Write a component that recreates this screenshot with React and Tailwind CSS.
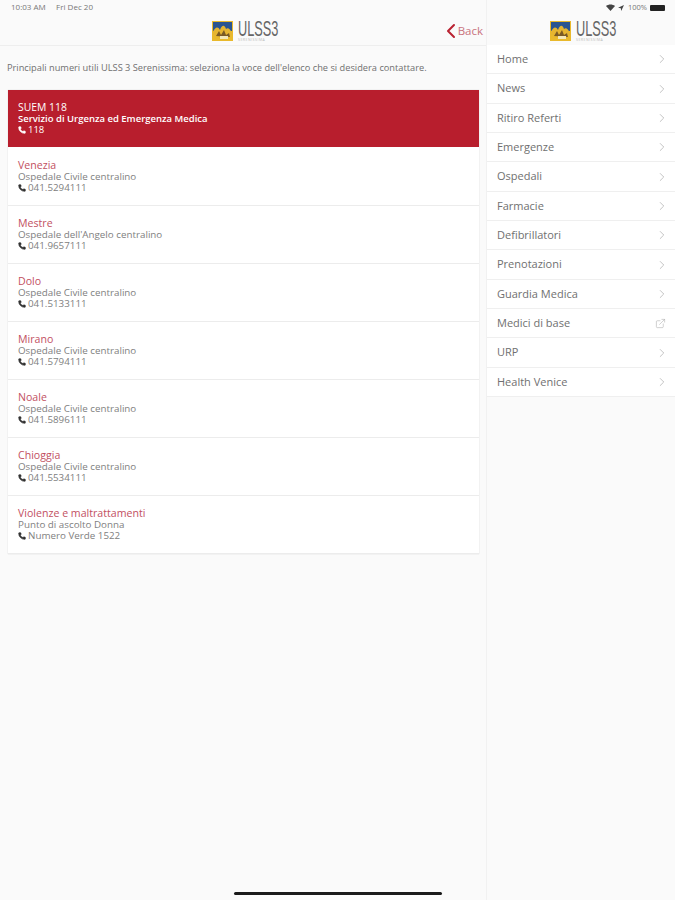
import { ChevronRight, ChevronLeft, Phone, ExternalLink } from "lucide-react";

const contacts = [
  { title: "Venezia", sub: "Ospedale Civile centralino", phone: "041.5294111" },
  { title: "Mestre", sub: "Ospedale dell'Angelo centralino", phone: "041.9657111" },
  { title: "Dolo", sub: "Ospedale Civile centralino", phone: "041.5133111" },
  { title: "Mirano", sub: "Ospedale Civile centralino", phone: "041.5794111" },
  { title: "Noale", sub: "Ospedale Civile centralino", phone: "041.5896111" },
  { title: "Chioggia", sub: "Ospedale Civile centralino", phone: "041.5534111" },
  { title: "Violenze e maltrattamenti", sub: "Punto di ascolto Donna", phone: "Numero Verde 1522" },
];

const menu = [
  "Home",
  "News",
  "Ritiro Referti",
  "Emergenze",
  "Ospedali",
  "Farmacie",
  "Defibrillatori",
  "Prenotazioni",
  "Guardia Medica",
  "Medici di base",
  "URP",
  "Health Venice",
];

function Logo() {
  return (
    <div className="flex items-center gap-[5px] h-[22px] ml-[4px]">
      <svg width="21" height="20" viewBox="0 0 21 20">
        <rect width="21" height="20" fill="#e9b92c" />
        <rect x="1" y="1" width="19" height="9" fill="#2a5490" />
        <path d="M1 11 C3 6 6 5 8 9 C10 3 13 4 14 8 C16 6 18 8 20 12 L20 14 L1 14 Z" fill="#e6b530" />
        <path d="M4 15 L7 10 L9 14 L12 9 L14 14 L17 12 L18 16 Z" fill="#7a5a24" />
        <rect x="8" y="15" width="8" height="3" fill="#f3e7b8" />
      </svg>
      <div className="flex flex-col w-[40px] h-[22px]">
        <span className="block w-[70px] h-[18px] font-['Liberation_Sans',sans-serif] text-[22px] leading-[18px] text-[#666] origin-left scale-x-[0.58] whitespace-nowrap">
          ULSS3
        </span>
        <span className="block h-[4px] text-[3.5px] leading-[4px] tracking-[0.5px] text-[#bbb] whitespace-nowrap">
          SERENISSIMA
        </span>
      </div>
    </div>
  );
}

function ContactRow({ title, sub, phone }) {
  return (
    <div className="h-[58px] bg-white border-b border-[#ececec] pl-[10px] pt-[12px] leading-[11px]">
      <div className="text-[10.6px] text-[#c2505f]">{title}</div>
      <div className="text-[9.8px] text-[#808080]">{sub}</div>
      <div className="flex items-center gap-[2px] text-[9.8px] text-[#808080]">
        <Phone size={8} fill="#333" stroke="#333" />
        <span>{phone}</span>
      </div>
    </div>
  );
}

export default function App() {
  return (
    <div className="relative flex w-[675px] h-[900px] overflow-hidden bg-[#fafafa] font-['Open_Sans',sans-serif]">
      <div className="flex flex-col w-[487px] border-r border-[#f1f1f1]">
        <div className="relative flex flex-col h-[46px] border-b border-[#eeeeee]">
          <div className="h-[16px] pl-[11px] pt-[2px] text-[8px] leading-[10px] text-[#777] whitespace-pre">
            10:03 AM     Fri Dec 20
          </div>
          <div className="flex justify-center mt-[4px]">
            <Logo />
          </div>
          <div className="absolute right-[3px] top-[19px] flex items-center text-[11.5px] leading-[24px] text-[#c9737d]">
            <ChevronLeft size={24} strokeWidth={2} className="text-[#b92231] -mr-[5px]" />
            <span>Back</span>
          </div>
        </div>
        <p className="mt-[16px] pl-[7px] text-[9.25px] leading-[12px] text-[#707070] whitespace-nowrap">
          Principali numeri utili ULSS 3 Serenissima: seleziona la voce dell'elenco che si desidera contattare.
        </p>
        <div className="mt-[16px] mx-[8px] w-[471px] shadow-[0_0_1px_rgba(0,0,0,0.2)]">
          <div className="h-[58px] bg-[#b81e2d] pl-[10px] pt-[12px] leading-[11px] text-white border-b border-white">
            <div className="text-[10.4px]">SUEM 118</div>
            <div className="text-[9.5px] font-semibold">Servizio di Urgenza ed Emergenza Medica</div>
            <div className="flex items-center gap-[2px] text-[9.5px]">
              <Phone size={8} fill="#fff" stroke="#fff" />
              <span>118</span>
            </div>
          </div>
          {contacts.map((c) => (
            <ContactRow key={c.title} title={c.title} sub={c.sub} phone={c.phone} />
          ))}
        </div>
      </div>

      <div className="flex flex-col flex-1">
        <div className="relative flex flex-col h-[45px] bg-[#fafafa]">
          <div className="flex justify-end items-center gap-[3px] h-[15px] pr-[10px] text-[7.5px] text-[#777]">
            <svg width="9" height="7" viewBox="0 0 9 7">
              <path d="M0 2 C2.5 0 6.5 0 9 2 L4.5 7 Z" fill="#444" />
            </svg>
            <svg width="6" height="6" viewBox="0 0 6 6">
              <path d="M6 0 L0 2.8 L2.8 3.2 L3.2 6 Z" fill="#444" />
            </svg>
            <span className="ml-[1px]">100%</span>
            <div className="w-[15px] h-[6px] rounded-[1px] bg-[#222]" />
          </div>
          <div className="flex justify-center mt-[5px]">
            <Logo />
          </div>
        </div>
        <div className="bg-white">
          {menu.map((m) => (
            <div
              key={m}
              className="flex items-center justify-between h-[29.35px] pl-[10px] pr-[6px] border-b border-[#efefef] text-[11px] text-[#707070]"
            >
              <span>{m}</span>
              {m === "Medici di base" ? (
                <ExternalLink size={11} strokeWidth={1.2} className="text-[#aaa] mr-[3px]" />
              ) : (
                <ChevronRight size={14} strokeWidth={1.2} className="text-[#aaa]" />
              )}
            </div>
          ))}
        </div>
      </div>

      <div className="absolute left-[234px] top-[892px] w-[208px] h-[3px] rounded-full bg-[#1a1a1a]" />
    </div>
  );
}
